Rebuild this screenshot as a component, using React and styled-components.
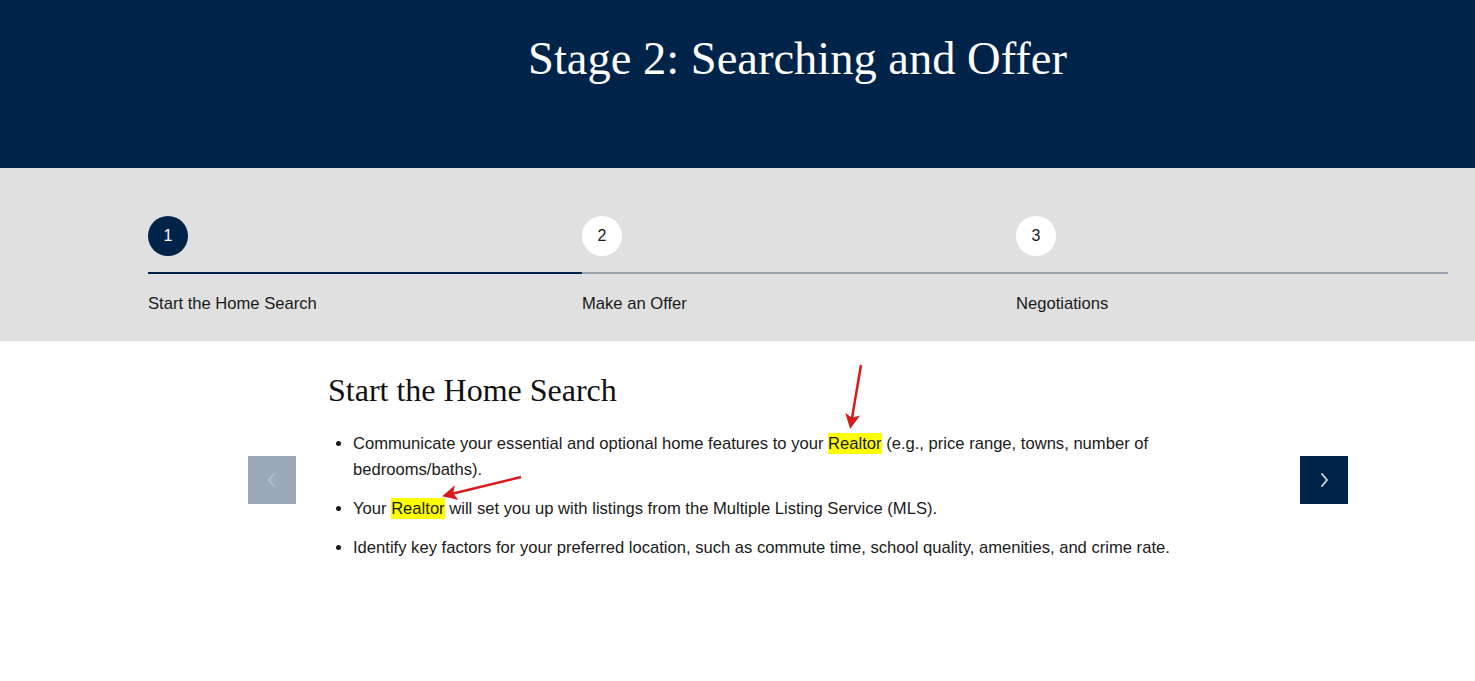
import React from "react";
import styled, { createGlobalStyle } from "styled-components";

const steps = [
  { id: 1, label: "Start the Home Search" },
  { id: 2, label: "Make an Offer" },
  { id: 3, label: "Negotiations" },
];

const activeStep = 1;

const App = () => {
  return (
    <Page>
      <GlobalStyle />
      <Hero>
        <HeroTitle>Stage 2: Searching and Offer</HeroTitle>
      </Hero>
      <StepsBand>
        <StepsRow>
          {steps.map((s) => (
            <Step key={s.id}>
              <StepCircle active={s.id === activeStep}>{s.id}</StepCircle>
              <StepLine active={s.id === activeStep} />
              <StepLabel>{s.label}</StepLabel>
            </Step>
          ))}
        </StepsRow>
      </StepsBand>
      <Slider>
        <NavButton disabled aria-label="previous">
          <Chevron dir="left" />
        </NavButton>
        <Slide>
          <SlideTitle>Start the Home Search</SlideTitle>
          <BulletList>
            <Bullet>
              Communicate your essential and optional home features to your{" "}
              <Mark>Realtor</Mark> (e.g., price range, towns, number of bedrooms/baths).
            </Bullet>
            <Bullet>
              Your <Mark>Realtor</Mark> will set you up with listings from the Multiple
              Listing Service (MLS).
            </Bullet>
            <Bullet>
              Identify key factors for your preferred location, such as commute time,
              school quality, amenities, and crime rate.
            </Bullet>
          </BulletList>
        </Slide>
        <NavButton aria-label="next">
          <Chevron dir="right" />
        </NavButton>
        <Annotations width="1475" height="681" viewBox="0 0 1475 681">
          <defs>
            <marker id="arrowhead" markerWidth="6" markerHeight="6" refX="4" refY="3" orient="auto">
              <path d="M0,0 L6,3 L0,6 L1.5,3 Z" fill="#d91a1a" />
            </marker>
          </defs>
          <line x1="861" y1="365" x2="851" y2="424" stroke="#d91a1a" strokeWidth="2.5" markerEnd="url(#arrowhead)" />
          <line x1="521" y1="477" x2="447" y2="495" stroke="#d91a1a" strokeWidth="2.5" markerEnd="url(#arrowhead)" />
        </Annotations>
      </Slider>
    </Page>
  );
};

const Chevron = ({ dir }) => (
  <svg width="14" height="18" viewBox="0 0 14 18">
    <path
      d={dir === "left" ? "M9 3 L4 9 L9 15" : "M5 3 L10 9 L5 15"}
      fill="none"
      stroke="currentColor"
      strokeWidth="1.8"
      strokeLinecap="round"
      strokeLinejoin="round"
    />
  </svg>
);

const GlobalStyle = createGlobalStyle`
  body {
    margin: 0;
    background: #ffffff;
    font-family: "Liberation Sans", Arial, sans-serif;
  }
`;

const Page = styled.div`
  width: 1475px;
  min-height: 681px;
  overflow: hidden;
`;

const Hero = styled.header`
  height: 168px;
  background: #00234a;
  display: flex;
  justify-content: center;
  padding-left: 120px;
  box-sizing: border-box;
`;

const HeroTitle = styled.h1`
  margin: 32px 0 0;
  font-family: "Liberation Serif", "Times New Roman", serif;
  font-weight: 400;
  font-size: 46.5px;
  line-height: 54px;
  color: #ffffff;
`;

const StepsBand = styled.section`
  height: 173px;
  background: #e0e0e0;
  padding: 48px 27px 0 148px;
  box-sizing: border-box;
`;

const StepsRow = styled.div`
  display: grid;
  grid-template-columns: 434px 434px 1fr;
`;

const Step = styled.div`
  display: flex;
  flex-direction: column;
`;

const StepCircle = styled.div`
  width: 40px;
  height: 40px;
  border-radius: 50%;
  display: flex;
  align-items: center;
  justify-content: center;
  font-size: 16px;
  background: ${(p) => (p.active ? "#00234a" : "#ffffff")};
  color: ${(p) => (p.active ? "#ffffff" : "#1a1a1a")};
`;

const StepLine = styled.div`
  height: 2px;
  margin-top: 16px;
  background: ${(p) => (p.active ? "#00234a" : "#9aa5b1")};
`;

const StepLabel = styled.div`
  margin-top: 20px;
  font-size: 16.6px;
  color: #1a1a1a;
`;

const Slider = styled.section`
  position: relative;
  display: flex;
  align-items: flex-start;
  padding: 0 0 0 248px;
  height: 340px;
`;

const NavButton = styled.button`
  width: 48px;
  height: 48px;
  margin-top: 115px;
  border: none;
  padding: 0;
  display: flex;
  align-items: center;
  justify-content: center;
  background: ${(p) => (p.disabled ? "#9aa8b8" : "#00234a")};
  color: ${(p) => (p.disabled ? "#b3bfcc" : "#d6dde6")};
  flex-shrink: 0;
`;

const Slide = styled.div`
  width: 1004px;
  box-sizing: border-box;
  padding-left: 32px;
`;

const SlideTitle = styled.h2`
  margin: 29px 0 0;
  font-family: "Liberation Serif", "Times New Roman", serif;
  font-weight: 400;
  font-size: 32px;
  line-height: 40px;
  color: #111111;
`;

const BulletList = styled.ul`
  margin: 21px 0 0;
  padding-left: 25px;
  width: 840px;
`;

const Bullet = styled.li`
  font-size: 16.6px;
  line-height: 26px;
  color: #1a1a1a;
  margin-bottom: 13px;
`;

const Mark = styled.span`
  background: #ffff00;
  padding: 1px 0;
`;

const Annotations = styled.svg`
  position: absolute;
  left: 0;
  top: -341px;
  pointer-events: none;
`;

export default App;
